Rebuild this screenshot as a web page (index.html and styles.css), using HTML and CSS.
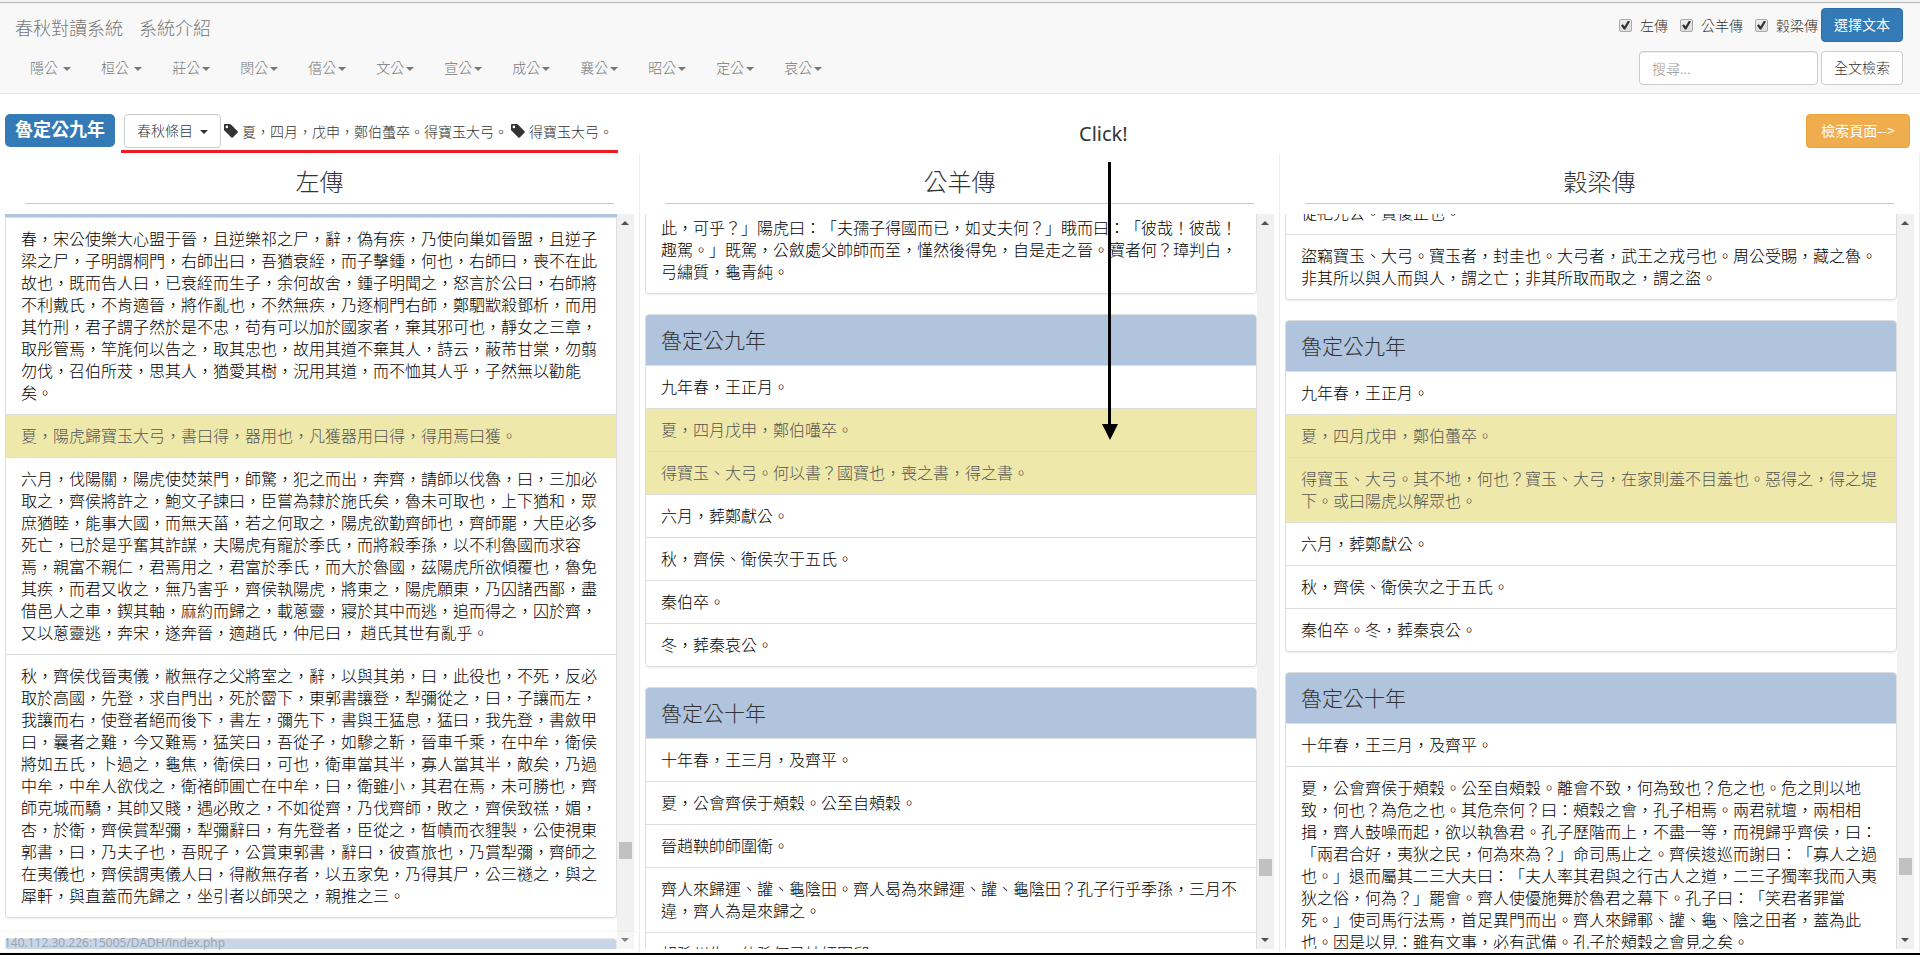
FILE: index.html
```html
<!DOCTYPE html>
<html lang="zh-TW">
<head>
<meta charset="utf-8">
<title>春秋對讀系統</title>
<link rel="stylesheet" href="styles.css">
</head>
<body>
<svg class="symbols" aria-hidden="true">
  <symbol id="tag" viewBox="0 0 14 14"><path fill-rule="evenodd" d="M.8 0h4.900c.5 0 .9.2 1.200.5l6.700 6.700c.4.4.4 1 0 1.400l-4.800 4.800c-.4.4-1 .4-1.400 0L.600 6.700C.2 6.400 0 6 0 5.500V.8C0 .3.3 0 .8 0zM2.900 1.600a1.300 1.300 0 1 0 0 2.600 1.300 1.300 0 0 0 0-2.600z"/></symbol>
</svg>
<nav class="navbar">
  <div class="nav-left">
    <div class="brands"><a href="#">春秋對讀系統</a><a href="#">系統介紹</a></div>
    <ul class="menu">
      <li><a href="#">隱公 <span class="caret"></span></a></li>
      <li><a href="#">桓公 <span class="caret"></span></a></li>
      <li><a href="#">莊公<span class="caret"></span></a></li>
      <li><a href="#">閔公<span class="caret"></span></a></li>
      <li><a href="#">僖公<span class="caret"></span></a></li>
      <li><a href="#">文公<span class="caret"></span></a></li>
      <li><a href="#">宣公<span class="caret"></span></a></li>
      <li><a href="#">成公<span class="caret"></span></a></li>
      <li><a href="#">襄公<span class="caret"></span></a></li>
      <li><a href="#">昭公<span class="caret"></span></a></li>
      <li><a href="#">定公<span class="caret"></span></a></li>
      <li><a href="#">哀公<span class="caret"></span></a></li>
    </ul>
  </div>
  <div class="nav-right">
    <form class="row">
      <label class="check"><input type="checkbox" checked>左傳</label>
      <label class="check"><input type="checkbox" checked>公羊傳</label>
      <label class="check"><input type="checkbox" checked>穀梁傳</label>
      <button type="button" class="btn primary">選擇文本</button>
    </form>
    <form class="row">
      <input class="search" type="text" placeholder="搜尋..." aria-label="搜尋">
      <button type="button" class="btn">全文檢索</button>
    </form>
  </div>
</nav>

<div class="toolbar">
  <span class="year">魯定公九年</span>
  <div class="entries">
    <button type="button" class="btn">春秋條目 <span class="caret"></span></button>
    <span class="tag"><svg class="tag-icon"><use href="#tag"/></svg>夏，四月，戊申，鄭伯蠆卒。得寶玉大弓。</span>
    <span class="tag"><svg class="tag-icon"><use href="#tag"/></svg>得寶玉大弓。</span>
  </div>
  <button type="button" class="btn warning">檢索頁面--&gt;</button>
</div>

<main class="columns">
  <section class="column">
    <h2>左傳</h2>
    <div class="pane">
      <div class="content">
        <div class="strip"></div>
        <ul class="list continued">
          <li>春，宋公使樂大心盟于晉，且逆樂祁之尸，辭，偽有疾，乃使向巢如晉盟，且逆子梁之尸，子明謂桐門，右師出曰，吾猶衰絰，而子擊鍾，何也，右師曰，喪不在此故也，既而告人曰，已衰絰而生子，余何故舍，鍾子明聞之，怒言於公曰，右師將不利戴氏，不肯適晉，將作亂也，不然無疾，乃逐桐門右師，鄭駟歂殺鄧析，而用其竹刑，君子謂子然於是不忠，苟有可以加於國家者，棄其邪可也，靜女之三章，取彤管焉，竿旄何以告之，取其忠也，故用其道不棄其人，詩云，蔽芾甘棠，勿翦勿伐，召伯所茇，思其人，猶愛其樹，況用其道，而不恤其人乎，子然無以勸能矣。</li>
          <li class="hit">夏，陽虎歸寶玉大弓，書曰得，器用也，凡獲器用曰得，得用焉曰獲。</li>
          <li>六月，伐陽關，陽虎使焚萊門，師驚，犯之而出，奔齊，請師以伐魯，曰，三加必取之，齊侯將許之，鮑文子諫曰，臣嘗為隸於施氏矣，魯未可取也，上下猶和，眾庶猶睦，能事大國，而無天菑，若之何取之，陽虎欲勤齊師也，齊師罷，大臣必多死亡，已於是乎奮其詐謀，夫陽虎有寵於季氏，而將殺季孫，以不利魯國而求容焉，親富不親仁，君焉用之，君富於季氏，而大於魯國，茲陽虎所欲傾覆也，魯免其疾，而君又收之，無乃害乎，齊侯執陽虎，將東之，陽虎願東，乃囚諸西鄙，盡借邑人之車，鍥其軸，麻約而歸之，載蔥靈，寢於其中而逃，追而得之，囚於齊，又以蔥靈逃，奔宋，遂奔晉，適趙氏，仲尼曰， 趙氏其世有亂乎。</li>
          <li>秋，齊侯伐晉夷儀，敝無存之父將室之，辭，以與其弟，曰，此役也，不死，反必取於高國，先登，求自門出，死於霤下，東郭書讓登，犁彌從之，曰，子讓而左，我讓而右，使登者絕而後下，書左，彌先下，書與王猛息，猛曰，我先登，書斂甲曰，曩者之難，今又難焉，猛笑曰，吾從子，如驂之靳，晉車千乘，在中牟，衛侯將如五氏，卜過之，龜焦，衛侯曰，可也，衛車當其半，寡人當其半，敵矣，乃過中牟，中牟人欲伐之，衛褚師圃亡在中牟，曰，衛雖小，其君在焉，未可勝也，齊師克城而驕，其帥又賤，遇必敗之，不如從齊，乃伐齊師，敗之，齊侯致禚，媚，杏，於衛，齊侯賞犁彌，犁彌辭曰，有先登者，臣從之，晳幘而衣貍製，公使視東郭書，曰，乃夫子也，吾貺子，公賞東郭書，辭曰，彼賓旅也，乃賞犁彌，齊師之在夷儀也，齊侯謂夷儀人曰，得敝無存者，以五家免，乃得其尸，公三襚之，與之犀軒，與直蓋而先歸之，坐引者以師哭之，親推之三。</li>
        </ul>
        <div class="next"></div>
      </div>
      <div class="scrollbar" aria-hidden="true"><i class="up"></i><i class="thumb t1"></i><i class="down"></i></div>
    </div>
  </section>
  <section class="column">
    <h2>公羊傳</h2>
    <div class="pane">
      <div class="content">
        <ul class="list continued scrolled-s">
          <li>此，可乎？」陽虎曰：「夫孺子得國而已，如丈夫何？」睋而曰：「彼哉！彼哉！趣駕。」既駕，公斂處父帥師而至，慬然後得免，自是走之晉。寶者何？璋判白，弓繡質，龜青純。</li>
        </ul>
        <ul class="list">
          <li class="head">魯定公九年</li>
          <li>九年春，王正月。</li>
          <li class="hit">夏，四月戊申，鄭伯囆卒。</li>
          <li class="hit">得寶玉、大弓。何以書？國寶也，喪之書，得之書。</li>
          <li>六月，葬鄭獻公。</li>
          <li>秋，齊侯、衛侯次于五氏。</li>
          <li>秦伯卒。</li>
          <li>冬，葬秦哀公。</li>
        </ul>
        <ul class="list">
          <li class="head">魯定公十年</li>
          <li>十年春，王三月，及齊平。</li>
          <li>夏，公會齊侯于頰穀。公至自頰穀。</li>
          <li>晉趙鞅帥師圍衛。</li>
          <li>齊人來歸運、讙、龜陰田。齊人曷為來歸運、讙、龜陰田？孔子行乎季孫，三月不違，齊人為是來歸之。</li>
          <li>叔孫州仇、仲孫何忌帥師圍郈。</li>
        </ul>
      </div>
      <div class="scrollbar" aria-hidden="true"><i class="up"></i><i class="thumb t2"></i><i class="down"></i></div>
    </div>
  </section>
  <section class="column">
    <h2>穀梁傳</h2>
    <div class="pane">
      <div class="content">
        <ul class="list continued scrolled-m">
          <li>從祀先公。貴復正也。</li>
          <li>盜竊寶玉、大弓。寶玉者，封圭也。大弓者，武王之戎弓也。周公受賜，藏之魯。非其所以與人而與人，謂之亡；非其所取而取之，謂之盜。</li>
        </ul>
        <ul class="list">
          <li class="head">魯定公九年</li>
          <li>九年春，王正月。</li>
          <li class="hit">夏，四月戊申，鄭伯蠆卒。</li>
          <li class="hit">得寶玉、大弓。其不地，何也？寶玉、大弓，在家則羞不目羞也。惡得之，得之堤下。或曰陽虎以解眾也。</li>
          <li>六月，葬鄭獻公。</li>
          <li>秋，齊侯、衛侯次之于五氏。</li>
          <li>秦伯卒。冬，葬秦哀公。</li>
        </ul>
        <ul class="list">
          <li class="head">魯定公十年</li>
          <li>十年春，王三月，及齊平。</li>
          <li>夏，公會齊侯于頰穀。公至自頰穀。離會不致，何為致也？危之也。危之則以地致，何也？為危之也。其危奈何？曰：頰穀之會，孔子相焉。兩君就壇，兩相相揖，齊人鼓噪而起，欲以執魯君。孔子歷階而上，不盡一等，而視歸乎齊侯，曰：「兩君合好，夷狄之民，何為來為？」命司馬止之。齊侯逡巡而謝曰：「寡人之過也。」退而屬其二三大夫曰：「夫人率其君與之行古人之道，二三子獨率我而入夷狄之俗，何為？」罷會。齊人使優施舞於魯君之幕下。孔子曰：「笑君者罪當死。」使司馬行法焉，首足異門而出。齊人來歸鄆、讙、龜、陰之田者，蓋為此也。因是以見：雖有文事，必有武備。孔子於頰穀之會見之矣。</li>
        </ul>
      </div>
      <div class="scrollbar" aria-hidden="true"><i class="up"></i><i class="thumb t3"></i><i class="down"></i></div>
    </div>
  </section>
</main>
<div class="status">140.112.30.226:15005/DADH/index.php</div>
<div class="note">Click!</div>
<svg class="arrow" viewBox="0 0 16 278" aria-hidden="true"><path d="M6 0h3v262h7L8 278 0 262h6z"/></svg>
</body>
</html>
```
FILE: styles.css
```css
* { box-sizing: border-box; }
body {
  margin: 0;
  height: 100vh;
  display: flex;
  flex-direction: column;
  overflow: hidden;
  position: relative;
  border-top: 2px solid #f2f2f2;
  border-bottom: 2px solid #000;
  background: #fff;
  color: #333;
  font: 300 14px/20px "Noto Sans CJK TC", sans-serif;
  text-spacing-trim: space-all;
}
a { color: #777; text-decoration: none; }
ul { list-style: none; margin: 0; padding: 0; }
button, input { font: inherit; }
.symbols { position: absolute; width: 0; height: 0; }

.navbar {
  display: flex;
  justify-content: space-between;
  flex: none;
  padding: 5px 17px 8px 15px;
  border-top: 1px solid #b5b5b5;
  border-bottom: 1px solid #e7e7e7;
  background: #f8f8f8;
}
.brands { display: flex; gap: 16px; padding-top: 9px; font-size: 18px; }
.menu { display: flex; margin-top: 10px; }
.menu a { display: block; padding: 10px 15px 0; }
.caret {
  display: inline-block;
  margin-left: 2px;
  vertical-align: middle;
  border-top: 4px solid;
  border-left: 4px solid transparent;
  border-right: 4px solid transparent;
}
.nav-right { display: flex; flex-direction: column; align-items: flex-end; gap: 9px; }
.row { display: flex; align-items: center; gap: 3px; }
.check { display: flex; align-items: center; gap: 8px; margin-left: 9px; }
.check input {
  appearance: none;
  display: grid;
  place-items: center;
  width: 13px;
  height: 13px;
  margin: 0;
  border: 1px solid #aaa;
  border-radius: 2px;
  background: linear-gradient(#eee, #ddd);
}
.check input:checked::before {
  content: "";
  width: 9px;
  height: 9px;
  background: #333;
  clip-path: polygon(0 55%, 20% 42%, 40% 65%, 78% 0, 100% 10%, 48% 100%, 32% 100%);
}
.btn {
  height: 34px;
  padding: 0 12px 2px;
  border: 1px solid #ccc;
  border-radius: 4px;
  background: #fff;
  color: #333;
  white-space: nowrap;
}
.primary { background: #337ab7; border-color: #2e6da4; color: #fff; font-weight: 400; }
.warning { min-width: 104px; background: #f0ad4e; border-color: #eea236; color: #fff; font-weight: 400; }
.search {
  width: 179px;
  height: 34px;
  padding: 0 12px;
  border: 1px solid #ccc;
  border-radius: 4px;
  background: #fff;
  box-shadow: inset 0 1px 1px rgba(0, 0, 0, .075);
}
.search::placeholder { color: #999; }

.toolbar { display: flex; align-items: flex-start; flex: none; padding: 20px 10px 1px 5px; }
.year {
  padding: 4px 10px 9px;
  border-radius: 5px;
  background: #337ab7;
  color: #fff;
  font-size: 18px;
  font-weight: 700;
}
.entries {
  display: flex;
  align-items: center;
  gap: 3px;
  margin: 0 auto 0 6px;
  padding: 0 5px 2px 3px;
  border-bottom: 3px solid #ed1c24;
}
.entries .caret { margin-left: 4px; }
.tag { display: flex; align-items: center; gap: 4px; }
.tag-icon { width: 14px; height: 14px; fill: #333; }

.columns { display: grid; grid-template-columns: repeat(3, 1fr); flex: 1; min-height: 0; }
.column { display: flex; flex-direction: column; min-height: 0; padding: 0 5px 4px; border-right: 1px solid #eee; }
h2 {
  margin: 0 20px 10px;
  padding: 12px 0 7px;
  border-bottom: 1px solid #dede1c;
  font-size: 24px;
  line-height: 30px;
  font-weight: 300;
  text-align: center;
}
.pane { display: flex; flex: 1; min-height: 0; overflow: hidden; }
.content { flex: 1; overflow: hidden; }
.strip { height: 3px; background: #b0c4de; }
.list {
  margin-bottom: 20px;
  border: 1px solid #ddd;
  border-radius: 4px;
  overflow: hidden;
  box-shadow: 0 1px 2px rgba(0, 0, 0, .075);
  color: #000;
  font-size: 16px;
  line-height: 22px;
}
.continued { border-radius: 0 0 4px 4px; }
.scrolled-s { margin-top: -8px; }
.scrolled-m { margin-top: -23px; }
.list li { padding: 9px 15px 11px; }
.list li + li { border-top: 1px solid #ddd; }
.list .head { padding: 13px 15px 15px; background: #b0c4de; color: #333; font-size: 21px; }
.list .hit { background: #eee8aa; color: #555; }
.next { height: 51px; border: 1px solid #ddd; border-radius: 4px 4px 0 0; background: #b0c4de; }

.scrollbar { position: relative; flex: none; width: 17px; background: #f1f1f1; }
.scrollbar i { position: absolute; }
.up, .down { left: 4px; border: 4px solid transparent; }
.up { top: 3px; border-bottom-color: #505050; }
.down { bottom: 3px; border-top-color: #505050; }
.thumb { left: 2px; width: 13px; height: 17px; background: #c1c1c1; }
.t1 { top: 85.4%; }
.t2 { top: 87.8%; }
.t3 { top: 87.6%; }

.status {
  position: absolute;
  left: 0;
  bottom: 0;
  width: 639px;
  height: 22px;
  padding-left: 4px;
  border: 1px solid rgba(220, 220, 220, .3);
  border-left: 0;
  border-radius: 0 4px 0 0;
  background: rgba(255, 255, 255, .3);
  color: #9aa3ad;
  font: 12px/22px "Open Sans", sans-serif;
}
.note { position: absolute; left: 1079px; top: 118px; font: 20px/28px "Noto Sans", sans-serif; }
.arrow { position: absolute; left: 1102px; top: 160px; width: 16px; height: 278px; }
```
